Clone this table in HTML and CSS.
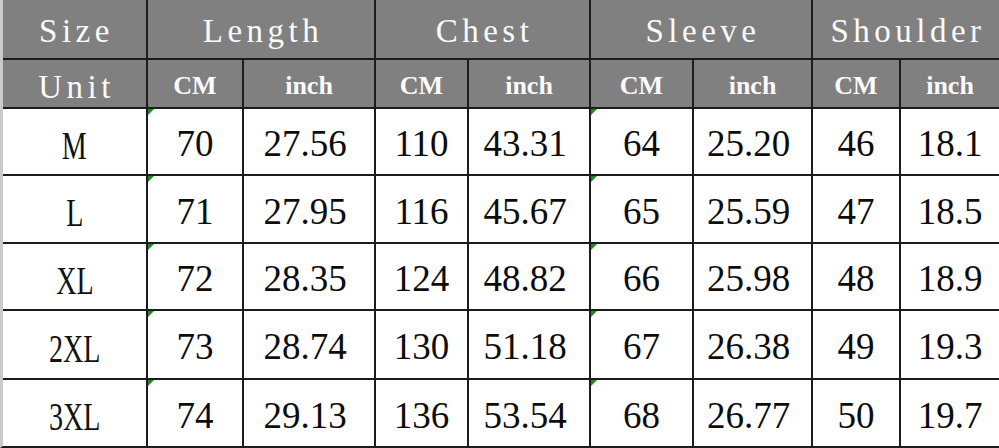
FILE: index.html
```html
<!DOCTYPE html>
<html lang="en">
<head>
<meta charset="utf-8">
<title>Size chart</title>
<link rel="stylesheet" href="styles.css">
</head>
<body>
<div class="sheet">
  <div class="cell hd big">Size</div>
  <div class="cell hd big span2">Length</div>
  <div class="cell hd big span2">Chest</div>
  <div class="cell hd big span2">Sleeve</div>
  <div class="cell hd big span2">Shoulder</div>

  <div class="cell hd big unit">Unit</div>
  <div class="cell hd sub">CM</div>
  <div class="cell hd sub">inch</div>
  <div class="cell hd sub">CM</div>
  <div class="cell hd sub">inch</div>
  <div class="cell hd sub">CM</div>
  <div class="cell hd sub">inch</div>
  <div class="cell hd sub">CM</div>
  <div class="cell hd sub">inch</div>

  <div class="cell size"><span>M</span></div>
  <div class="cell num mark">70</div><div class="cell num lft">27.56</div>
  <div class="cell num">110</div><div class="cell num lft">43.31</div>
  <div class="cell num mark">64</div><div class="cell num lft">25.20</div>
  <div class="cell num">46</div><div class="cell num">18.1</div>

  <div class="cell size"><span>L</span></div>
  <div class="cell num mark">71</div><div class="cell num lft">27.95</div>
  <div class="cell num">116</div><div class="cell num lft">45.67</div>
  <div class="cell num mark">65</div><div class="cell num lft">25.59</div>
  <div class="cell num">47</div><div class="cell num">18.5</div>

  <div class="cell size"><span>XL</span></div>
  <div class="cell num mark">72</div><div class="cell num lft">28.35</div>
  <div class="cell num">124</div><div class="cell num lft">48.82</div>
  <div class="cell num mark">66</div><div class="cell num lft">25.98</div>
  <div class="cell num">48</div><div class="cell num">18.9</div>

  <div class="cell size"><span>2XL</span></div>
  <div class="cell num mark">73</div><div class="cell num lft">28.74</div>
  <div class="cell num">130</div><div class="cell num lft">51.18</div>
  <div class="cell num mark">67</div><div class="cell num lft">26.38</div>
  <div class="cell num">49</div><div class="cell num">19.3</div>

  <div class="cell size"><span>3XL</span></div>
  <div class="cell num mark">74</div><div class="cell num lft">29.13</div>
  <div class="cell num">136</div><div class="cell num lft">53.54</div>
  <div class="cell num mark">68</div><div class="cell num lft">26.77</div>
  <div class="cell num">50</div><div class="cell num">19.7</div>
</div>
</body>
</html>
```
FILE: styles.css
```css
html, body {
  margin: 0;
  padding: 0;
  background: #ffffff;
}

.sheet {
  display: grid;
  grid-template-columns: 143px 94px 130px 91px 120px 101px 117px 86px 1fr;
  grid-template-rows: 58px 47px 65px 66px 65px 67px 66px;
  gap: 2px;
  width: 999px;
  box-sizing: border-box;
  background: #1c1c1c;
  border-left: 3px solid #c9c9c9;
  border-bottom: 2px solid #1c1c1c;
  font-family: "Liberation Serif", "Times New Roman", serif;
}

.cell {
  position: relative;
  display: flex;
  align-items: center;
  justify-content: center;
  background: #ffffff;
  box-sizing: border-box;
  white-space: nowrap;
}

.span2 {
  grid-column: span 2;
}

.hd {
  background: #808080;
  color: #fbfbfb;
}

.big {
  font-size: 33px;
  letter-spacing: 4.5px;
  padding-top: 4px;
  padding-left: 4px;
}

.unit {
  padding-top: 8px;
}

.sub {
  font-weight: bold;
  font-size: 26px;
  padding-top: 4px;
}

.size {
  font-size: 39px;
  padding-top: 7px;
  color: #111;
}

.size span {
  display: inline-block;
  transform: scaleX(0.72);
}

.num {
  font-size: 37px;
  color: #0c0c0c;
  padding-top: 4px;
}

.lft {
  padding-right: 8px;
}

.mark::before {
  content: "";
  position: absolute;
  left: 0;
  top: 0;
  width: 0;
  height: 0;
  border-top: 6px solid #1f8a1f;
  border-right: 6px solid transparent;
}
```
